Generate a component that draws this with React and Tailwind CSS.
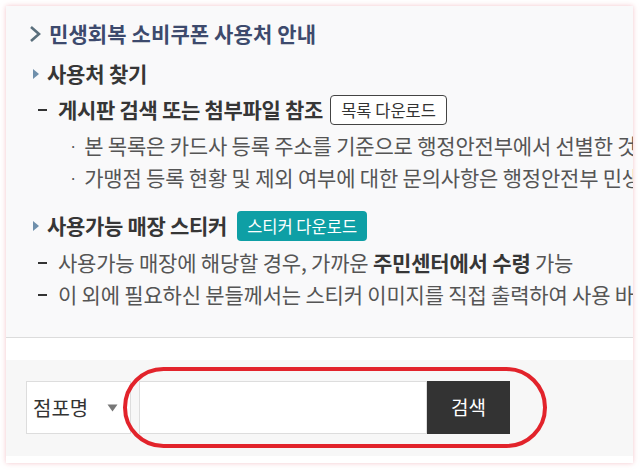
import React from "react";

const font = { fontFamily: '"Noto Sans CJK KR", "Noto Sans", sans-serif' };

function Tri() {
  return (
    <svg width="8" height="12" viewBox="0 0 8 12" className="shrink-0">
      <path d="M1 1 L7 6 L1 11 Z" fill="#6f8fab" />
    </svg>
  );
}

function Dash() {
  return <span className="inline-block w-[9px] h-[2.5px] bg-[#333] shrink-0" />;
}

export default function App() {
  return (
    <div className="w-[640px] h-[470px] bg-white p-[6px] overflow-hidden" style={font}>
      <div className="w-[627px] h-[457px] bg-white shadow-[0_0_5px_rgba(235,150,160,0.55)] flex flex-col overflow-hidden">
        {/* top info section */}
        <div className="h-[332px] bg-[#f9f9fa] border-b border-[#dcdcdc] pt-[14px] overflow-hidden whitespace-nowrap">
          <div className="h-[28px] flex items-center pl-[23px] gap-[8px]">
            <svg width="12" height="18" viewBox="0 0 12 18" className="shrink-0">
              <path d="M2 2 L10 9 L2 16" fill="none" stroke="#5a6f7c" strokeWidth="2.6" />
            </svg>
            <span className="text-[21px] font-bold text-[#3d4a6d] tracking-[0.1px]">민생회복 소비쿠폰 사용처 안내</span>
          </div>
          <div className="h-[28px] mt-[12px] flex items-center pl-[26px] gap-[7px]">
            <Tri />
            <span className="text-[21px] font-bold text-[#363636] tracking-[-0.2px]">사용처 찾기</span>
          </div>
          <div className="h-[30px] mt-[7px] flex items-center pl-[32px] gap-[11px]">
            <Dash />
            <span className="text-[21px] font-bold text-[#363636] tracking-[-0.3px]">게시판 검색 또는 첨부파일 참조</span>
            <span className="h-[30px] px-[10px] ml-[-4px] flex items-center border border-[#444] rounded-[4px] bg-white text-[16.5px] text-[#333]">목록 다운로드</span>
          </div>
          <div className="h-[32px] mt-[5px] flex items-center pl-[63px] gap-[7px] text-[21px] text-[#555] tracking-[-0.2px]">
            <span className="text-[15px]">·</span>
            <span>본 목록은 카드사 등록 주소를 기준으로 행정안전부에서 선별한 것으로 일부 차이가 있을 수 있습니다.</span>
          </div>
          <div className="h-[32px] flex items-center pl-[63px] gap-[7px] text-[21px] text-[#555] tracking-[-0.2px]">
            <span className="text-[15px]">·</span>
            <span>가맹점 등록 현황 및 제외 여부에 대한 문의사항은 행정안전부 민생회복 소비쿠폰 콜센터로 문의하시기 바랍니다.</span>
          </div>
          <div className="h-[30px] mt-[17px] flex items-center pl-[26px] gap-[7px]">
            <Tri />
            <span className="text-[21px] font-bold text-[#363636] tracking-[-0.3px]">사용가능 매장 스티커</span>
            <span className="h-[30px] px-[10px] ml-[3px] flex items-center rounded-[4px] bg-[#0e9fa5] text-[16.5px] text-white">스티커 다운로드</span>
          </div>
          <div className="h-[32px] mt-[6px] flex items-center pl-[32px] gap-[11px] text-[21px] text-[#555] tracking-[-0.2px]">
            <Dash />
            <span>
              사용가능 매장에 해당할 경우, 가까운 <b className="font-bold text-[#363636]">주민센터에서 수령</b> 가능
            </span>
          </div>
          <div className="h-[32px] flex items-center pl-[32px] gap-[11px] text-[21px] text-[#555] tracking-[-0.2px]">
            <Dash />
            <span>이 외에 필요하신 분들께서는 스티커 이미지를 직접 출력하여 사용 바랍니다.</span>
          </div>
        </div>

        {/* white gap */}
        <div className="h-[22px] bg-white" />

        {/* search area */}
        <div className="relative h-[96px] bg-[#f7f7f7] pt-[21px] pl-[20px] flex items-start">
          <div className="w-[105px] h-[53px] bg-white border border-[#dddddd] flex items-center pl-[6px] pr-[12px] justify-between">
            <span className="text-[20px] text-[#333]">점포명</span>
            <svg width="11" height="8" viewBox="0 0 11 8">
              <path d="M0.5 0.5 L10.5 0.5 L5.5 7.5 Z" fill="#777" />
            </svg>
          </div>
          <div className="w-[288px] h-[53px] ml-[8px] bg-white border border-[#dddddd]" />
          <div className="w-[83px] h-[53px] bg-[#333333] flex items-center justify-center text-[19px] text-white">검색</div>
          <div className="absolute left-[117px] top-[7px] w-[424px] h-[81px] border-[4.5px] border-[#e2232b] rounded-full" />
        </div>
        <div className="flex-1 bg-white" />
      </div>
    </div>
  );
}
